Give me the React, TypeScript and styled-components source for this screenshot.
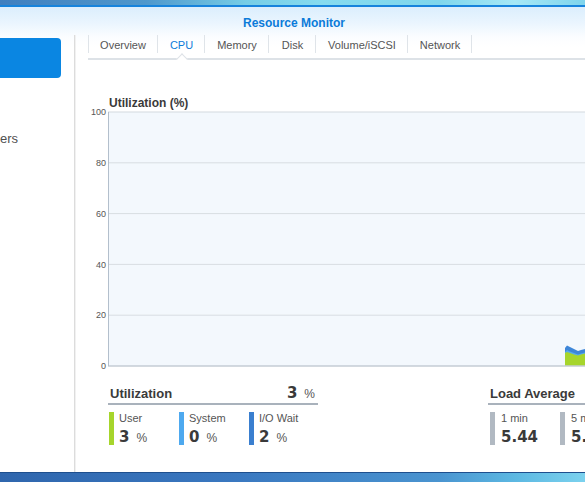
import React from "react";
import styled, { createGlobalStyle } from "styled-components";

const Global = createGlobalStyle`
  html, body { margin: 0; padding: 0; }
  body { width: 585px; height: 482px; overflow: hidden; background: #fff; font-family: "Liberation Sans", Arial, sans-serif; }
  #root { width: 585px; height: 482px; }
`;

const Screen = styled.div`
  width: 585px;
  height: 482px;
  display: flex;
  flex-direction: column;
  overflow: hidden;
`;

const DesktopTop = styled.div`
  height: 5px;
  flex: none;
  background: linear-gradient(90deg, #3f7fbf 0%, #4f98cc 25%, #76cde6 42%, #86dbef 55%, #7fd6ec 75%, #a6e8f6 88%, #7ed4ec 100%);
`;

const AccentLine = styled.div`
  height: 2px;
  flex: none;
  background: #1683dc;
`;

const DesktopBottom = styled.div`
  height: 9px;
  flex: none;
  border-top: 1px solid #1e4f8e;
  background: linear-gradient(90deg, #2f66ad 0%, #3a78c0 40%, #4a94d0 75%, #5cb8e2 88%, #7cd2ee 100%);
`;

const Window = styled.div`
  flex: 1;
  display: flex;
  flex-direction: column;
  min-height: 0;
  background: linear-gradient(180deg, #dbeefd 0px, #eaf5fe 16px, #fbfdff 30px, #ffffff 40px);
`;

const Header = styled.div`
  height: 28px;
  flex: none;
  box-sizing: border-box;
  padding-top: 6px;
  text-align: center;
`;

const Title = styled.span`
  display: inline-block;
  font-size: 12px;
  line-height: 14px;
  font-weight: bold;
  color: #0b7bd9;
  margin-left: 3px;
`;

const Body = styled.div`
  flex: 1;
  display: flex;
  min-height: 0;
`;

const Sidebar = styled.div`
  width: 74px;
  flex: none;
  border-right: 1px solid #dcdcdc;
  box-shadow: 1px 0 0 #f1f1f1;
  display: flex;
  flex-direction: column;
`;

const SideSelected = styled.div`
  margin-top: 3px;
  width: 61px;
  height: 40px;
  background: #0a86e2;
  border-radius: 0 4px 4px 0;
`;

const SideItem = styled.div`
  margin-top: 53px;
  font-size: 13px;
  line-height: 16px;
  color: #505050;
  white-space: nowrap;
`;

const Main = styled.div`
  flex: 1;
  min-width: 0;
  overflow: hidden;
  display: flex;
  flex-direction: column;
`;

const TabBar = styled.div`
  position: relative;
  margin-left: 13px;
  height: 23px;
  display: flex;
  border-bottom: 2px solid #dde2e7;
`;

const Tab = styled.div<{ $active?: boolean; $first?: boolean; $w: number }>`
  position: relative;
  width: ${(p) => p.$w}px;
  flex: none;
  box-sizing: border-box;
  padding-top: 3px;
  text-align: center;
  font-size: 11px;
  line-height: 15px;
  color: ${(p) => (p.$active ? "#0b7bd9" : "#555")};
  white-space: nowrap;
  &::after {
    content: "";
    position: absolute;
    right: 0;
    top: 0;
    width: 1px;
    height: 18px;
    background: #dfe4e9;
  }
  ${(p) =>
    p.$first
      ? `&::before { content: ""; position: absolute; left: 0; top: 0; width: 1px; height: 18px; background: #dfe4e9; }`
      : ""}
`;

const Notch = styled.div`
  position: absolute;
  left: 90px;
  bottom: -5px;
  width: 7px;
  height: 7px;
  background: #fff;
  border-left: 1.5px solid #dde2e7;
  border-top: 1.5px solid #dde2e7;
  transform: rotate(45deg);
`;

const ChartTitle = styled.div`
  margin-top: 37px;
  padding-left: 34px;
  font-size: 12px;
  line-height: 12px;
  font-weight: bold;
  color: #3a3a3a;
`;

const ChartSvg = styled.svg`
  display: block;
  margin-left: 13px;
  overflow: visible;
  flex: none;
`;

const Summary = styled.div`
  margin-top: 15px;
  margin-left: 33px;
  display: flex;
`;

const Block = styled.div<{ $offset?: number; $width: number }>`
  width: ${(p) => p.$width}px;
  flex: none;
  margin-left: ${(p) => p.$offset ?? 0}px;
`;

const BlockHeader = styled.div`
  height: 19px;
  display: flex;
  align-items: baseline;
  justify-content: space-between;
  border-bottom: 2px solid #a9b2bc;
  padding: 0 3px 0 2px;
`;

const BlockTitle = styled.span`
  font-size: 13px;
  line-height: 19px;
  font-weight: bold;
  color: #3a3a3a;
`;

const Total = styled.span`
  font-family: "DejaVu Sans", Verdana, sans-serif;
  font-size: 15px;
  line-height: 19px;
  font-weight: bold;
  color: #3a3a3a;
`;

const Unit = styled.span`
  font-family: "Liberation Sans", Arial, sans-serif;
  font-weight: normal;
  font-size: 12px;
  color: #555;
  margin-left: 7px;
`;

const Items = styled.div<{ $pad: number }>`
  display: flex;
  margin-top: 7px;
  padding-left: ${(p) => p.$pad}px;
`;

const Item = styled.div<{ $color: string; $gap: number }>`
  width: 70px;
  height: 33px;
  flex: none;
  box-sizing: border-box;
  border-left: 5px solid ${(p) => p.$color};
  padding-left: ${(p) => p.$gap}px;
  white-space: nowrap;
`;

const ItemLabel = styled.div`
  font-size: 11px;
  line-height: 12px;
  color: #555;
`;

const ItemValue = styled.div`
  margin-top: 2px;
  font-family: "DejaVu Sans", Verdana, sans-serif;
  font-size: 15px;
  line-height: 22px;
  font-weight: bold;
  color: #3a3a3a;
`;

const tabs = [
  { label: "Overview", w: 70 },
  { label: "CPU", w: 47 },
  { label: "Memory", w: 64 },
  { label: "Disk", w: 47 },
  { label: "Volume/iSCSI", w: 92 },
  { label: "Network", w: 64 },
];

const gridVals = [100, 80, 60, 40, 20, 0];

function Chart() {
  const top = 3;
  const bottom = 257;
  const plotX = 20;
  const w = 497;
  const step = (bottom - top) / 5;
  const blue =
    "M477,257 L477,239 L479,236.5 L482,238 L486,240 L490,242 L493,241 L497,240 L497,257 Z";
  const light =
    "M477,257 L477,243 L479,241 L482,242.5 L486,244 L490,245.5 L493,244.5 L497,243.5 L497,257 Z";
  const green =
    "M477,257 L477,244 L479,243 L482,244 L486,245.5 L490,246.5 L493,245.5 L497,244.5 L497,257 Z";
  return (
    <ChartSvg width={w} height={260} viewBox={`0 0 ${w} 260`}>
      <rect x={plotX} y={top} width={w - plotX} height={bottom - top} fill="#f3f8fd" />
      {gridVals.map((v, i) => {
        const y = top + i * step;
        return (
          <g key={v}>
            {i > 0 && i < 5 && (
              <line x1={plotX} x2={w} y1={y} y2={y} stroke="#d8dde2" strokeWidth={1} />
            )}
            <text
              x={18}
              y={y + 3.2}
              textAnchor="end"
              fontSize={9}
              fontFamily="'Liberation Sans', Arial, sans-serif"
              fill="#555"
            >
              {v}
            </text>
          </g>
        );
      })}
      <line x1={plotX} x2={w} y1={top} y2={top} stroke="#d3d9df" strokeWidth={1} />
      <path d={blue} fill="#3d86d8" />
      <path d={light} fill="#56aaee" />
      <path d={green} fill="#a6d52c" />
      <line x1={plotX} x2={w} y1={bottom} y2={bottom} stroke="#c4ccd4" strokeWidth={1.5} />
      <line x1={plotX + 0.5} x2={plotX + 0.5} y1={top} y2={bottom} stroke="#b3bfcc" strokeWidth={1} />
    </ChartSvg>
  );
}

const cpuItems = [
  { label: "User", value: "3", color: "#a6d52c" },
  { label: "System", value: "0", color: "#4ea9ef" },
  { label: "I/O Wait", value: "2", color: "#3a7fcf" },
];

const loadItems = [
  { label: "1 min", value: "5.44" },
  { label: "5 min", value: "5.31" },
];

export default function App() {
  return (
    <Screen>
      <Global />
      <DesktopTop />
      <AccentLine />
      <Window>
        <Header>
          <Title>Resource Monitor</Title>
        </Header>
        <Body>
          <Sidebar>
            <SideSelected />
            <SideItem>ers</SideItem>
          </Sidebar>
          <Main>
            <TabBar>
              {tabs.map((t, i) => (
                <Tab key={t.label} $w={t.w} $active={t.label === "CPU"} $first={i === 0}>
                  {t.label}
                </Tab>
              ))}
              <Notch />
            </TabBar>
            <ChartTitle>Utilization (%)</ChartTitle>
            <Chart />
            <Summary>
              <Block $width={210}>
                <BlockHeader>
                  <BlockTitle>Utilization</BlockTitle>
                  <Total>
                    3<Unit>%</Unit>
                  </Total>
                </BlockHeader>
                <Items $pad={1}>
                  {cpuItems.map((it) => (
                    <Item key={it.label} $color={it.color} $gap={5}>
                      <ItemLabel>{it.label}</ItemLabel>
                      <ItemValue>
                        {it.value}
                        <Unit>%</Unit>
                      </ItemValue>
                    </Item>
                  ))}
                </Items>
              </Block>
              <Block $width={160} $offset={170}>
                <BlockHeader>
                  <BlockTitle>Load Average</BlockTitle>
                </BlockHeader>
                <Items $pad={2}>
                  {loadItems.map((it) => (
                    <Item key={it.label} $color="#b1b9c2" $gap={6}>
                      <ItemLabel>{it.label}</ItemLabel>
                      <ItemValue>{it.value}</ItemValue>
                    </Item>
                  ))}
                </Items>
              </Block>
            </Summary>
          </Main>
        </Body>
      </Window>
      <DesktopBottom />
    </Screen>
  );
}
